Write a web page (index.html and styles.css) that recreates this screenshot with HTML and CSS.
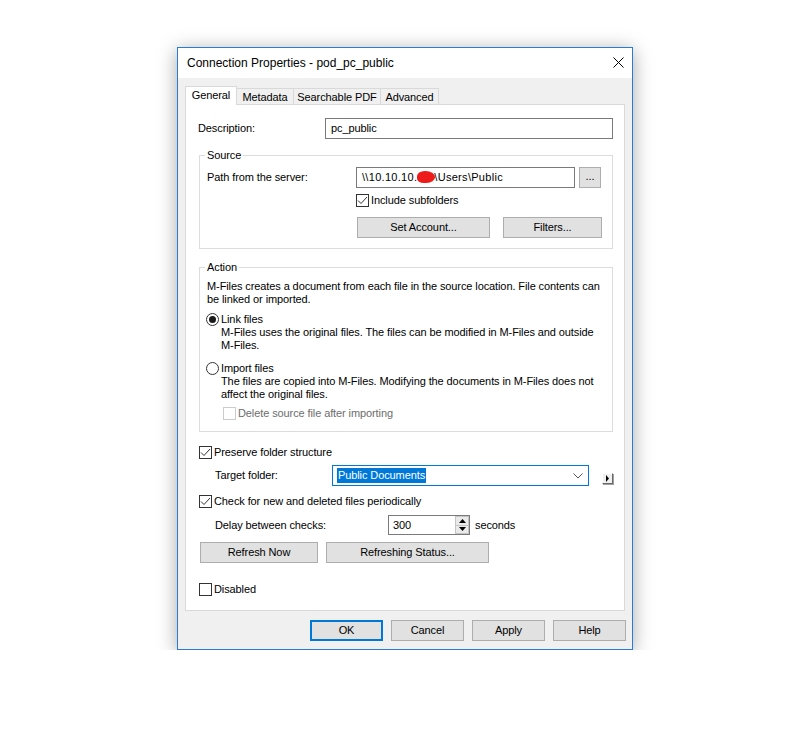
FILE: index.html
```html
<!DOCTYPE html>
<html>
<head>
<meta charset="utf-8">
<title>Connection Properties</title>
<link rel="stylesheet" href="styles.css">
</head>
<body>
<div class="stage">
  <div class="window">
    <div class="titlebar">
      <span class="title">Connection Properties - pod_pc_public</span>
      <svg class="close" width="11" height="11" viewBox="0 0 11 11"><path d="M0.5 0.5 L10.5 10.5 M10.5 0.5 L0.5 10.5" stroke="#000" stroke-width="1" fill="none"/></svg>
    </div>
    <div class="client">
      <div class="tabs">
        <div class="tab sel t-general">General</div>
        <div class="tab t-meta">Metadata</div>
        <div class="tab t-pdf">Searchable PDF</div>
        <div class="tab t-adv">Advanced</div>
      </div>
      <div class="panel">
        <div class="row desc-row">
          <span class="lbl lbl-desc">Description:</span>
          <div class="edit edit-desc">pc_public</div>
        </div>

        <fieldset class="group group-source">
          <legend>Source</legend>
          <div class="row path-row">
            <span class="lbl lbl-path">Path from the server:</span>
            <div class="edit edit-path">\\10.10.10.<span class="redact"></span>\Users\Public</div>
            <div class="btn btn-browse">...</div>
          </div>
          <div class="check check-sub">
            <span class="box"><svg width="11" height="11" viewBox="0 0 11 11"><path d="M1 5.5 L4 8.5 L10 2" stroke="#333" stroke-width="1" fill="none"/></svg></span>
            <span>Include subfolders</span>
          </div>
          <div class="row src-btns">
            <div class="btn btn-account">Set Account...</div>
            <div class="btn btn-filters">Filters...</div>
          </div>
        </fieldset>

        <fieldset class="group group-action">
          <legend>Action</legend>
          <div class="para">M-Files creates a document from each file in the source location. File contents can be linked or imported.</div>
          <div class="radio radio-link">
            <span class="circle on"><span class="dot"></span></span>
            <span>Link files</span>
          </div>
          <div class="para sub">M-Files uses the original files. The files can be modified in M-Files and outside M-Files.</div>
          <div class="radio radio-import">
            <span class="circle"></span>
            <span>Import files</span>
          </div>
          <div class="para sub">The files are copied into M-Files. Modifying the documents in M-Files does not affect the original files.</div>
          <div class="check check-delete disabled">
            <span class="box"></span>
            <span>Delete source file after importing</span>
          </div>
        </fieldset>

        <div class="check check-preserve">
          <span class="box"><svg width="11" height="11" viewBox="0 0 11 11"><path d="M1 5.5 L4 8.5 L10 2" stroke="#333" stroke-width="1" fill="none"/></svg></span>
          <span>Preserve folder structure</span>
        </div>
        <div class="row target-row">
          <span class="lbl lbl-indent lbl-target">Target folder:</span>
          <div class="combo">
            <span class="combo-sel">Public Documents</span>
            <svg class="chev" width="10" height="6" viewBox="0 0 10 6"><path d="M0.5 0.5 L5 5 L9.5 0.5" stroke="#555" stroke-width="1" fill="none"/></svg>
          </div>
          <div class="mini-btn"><svg width="5" height="7" viewBox="0 0 5 7"><path d="M1 0 L4 3.5 L1 7 Z" fill="#000"/></svg></div>
        </div>
        <div class="check check-periodic">
          <span class="box"><svg width="11" height="11" viewBox="0 0 11 11"><path d="M1 5.5 L4 8.5 L10 2" stroke="#333" stroke-width="1" fill="none"/></svg></span>
          <span>Check for new and deleted files periodically</span>
        </div>
        <div class="row delay-row">
          <span class="lbl lbl-indent lbl-delay">Delay between checks:</span>
          <div class="spin">
            <span class="spin-val">300</span>
            <div class="spin-btns">
              <div class="spin-b"><svg width="7" height="4" viewBox="0 0 7 4"><path d="M0 4 L3.5 0 L7 4 Z" fill="#000"/></svg></div>
              <div class="spin-b"><svg width="7" height="4" viewBox="0 0 7 4"><path d="M0 0 L3.5 4 L7 0 Z" fill="#000"/></svg></div>
            </div>
          </div>
          <span class="unit">seconds</span>
        </div>
        <div class="row refresh-row">
          <div class="btn btn-refresh">Refresh Now</div>
          <div class="btn btn-status">Refreshing Status...</div>
        </div>
        <div class="check check-disabled">
          <span class="box"></span>
          <span>Disabled</span>
        </div>
      </div>
      <div class="footer">
        <div class="btn fbtn default">OK</div>
        <div class="btn fbtn">Cancel</div>
        <div class="btn fbtn">Apply</div>
        <div class="btn fbtn">Help</div>
      </div>
    </div>
  </div>
</div>
</body>
</html>
```
FILE: styles.css
```css
html, body {
  margin: 0;
  padding: 0;
  background: #ffffff;
}
body {
  font-family: "Liberation Sans", Arial, sans-serif;
  font-size: 11px;
  line-height: 13px;
  letter-spacing: -0.1px;
  color: #000;
}
.stage {
  padding: 47px 0 0 177px;
}
.window {
  width: 456px;
  height: 603px;
  box-sizing: border-box;
  border: 1px solid #2a7bd2;
  background: #f0f0f0;
  box-shadow: 0 3px 18px rgba(0, 0, 0, 0.35);
  display: flex;
  flex-direction: column;
}
.titlebar {
  height: 30px;
  background: #ffffff;
  display: flex;
  align-items: center;
  padding-left: 9px;
}
.title {
  font-size: 12px;
  line-height: 15px;
  letter-spacing: 0;
}
.close {
  margin-left: auto;
  margin-right: 8px;
  margin-top: -1px;
}
.client {
  flex: 1;
  display: flex;
  flex-direction: column;
  padding: 8px 7px 8px 7px;
}
.tabs {
  display: flex;
  align-items: flex-end;
  height: 18px;
}
.tab {
  box-sizing: border-box;
  height: 16px;
  border: 1px solid #d9d9d9;
  border-bottom: none;
  background: #f0f0f0;
  text-align: center;
  line-height: 16px;
  margin-left: -1px;
}
.tab.sel {
  position: relative;
  z-index: 2;
  height: 19px;
  margin-bottom: -1px;
  background: #ffffff;
  margin-left: 0;
  line-height: 16px;
}
.t-general { width: 52px; }
.t-meta { width: 58px; }
.t-pdf { width: 88px; }
.t-adv { width: 59px; }

.panel {
  flex: 1;
  box-sizing: border-box;
  background: #ffffff;
  border: 1px solid #d9d9d9;
  padding: 13px 11px 0 12px;
  display: flex;
  flex-direction: column;
}
.row {
  display: flex;
  align-items: center;
}
.lbl {
  flex: none;
}
.lbl-desc { width: 127px; }
.edit {
  box-sizing: border-box;
  height: 21px;
  border: 1px solid #7a7a7a;
  background: #fff;
  padding-left: 5px;
  line-height: 19px;
  white-space: nowrap;
  overflow: hidden;
}
.edit-desc { flex: 1; }

.group {
  margin: 10px 0 0 1px;
  padding: 5px 7px 10px 7px;
  border: 1px solid #dcdcdc;
  min-width: 0;
}
.group legend {
  padding: 0 2px;
  margin-left: -2px;
  line-height: 13px;
}
.group-action {
  margin-top: 12px;
  padding-top: 6px;
  padding-bottom: 11px;
}

.lbl-path { width: 149px; }
.edit-path {
  width: 219px;
  flex: none;
  letter-spacing: 0.3px;
}
.redact {
  display: inline-block;
  width: 18px;
  height: 12px;
  background: #ee1b1b;
  border-radius: 45% 55% 50% 40%;
  vertical-align: -2px;
  margin: 0 -1px 0 0;
}
.btn {
  box-sizing: border-box;
  height: 21px;
  background: #e1e1e1;
  border: 1px solid #adadad;
  text-align: center;
  line-height: 19px;
  flex: none;
}
.btn-browse {
  width: 22px;
  margin-left: 4px;
  line-height: 17px;
}

.check {
  display: flex;
  align-items: center;
  height: 13px;
}
.box {
  box-sizing: border-box;
  width: 13px;
  height: 13px;
  border: 1px solid #333333;
  background: #fff;
  margin-right: 2px;
  flex: none;
  display: flex;
  align-items: center;
  justify-content: center;
}
.box svg { display: block; }
.check.disabled { color: #6d6d6d; }
.check.disabled .box { border-color: #cccccc; }

.check-sub { margin-top: 6px; margin-left: 149px; }
.src-btns { margin-top: 10px; }
.btn-account { width: 133px; margin-left: 150px; }
.btn-filters { width: 99px; margin-left: 13px; }

.para { line-height: 13px; }
.para.sub { padding-left: 14px; }
.radio {
  display: flex;
  align-items: center;
  height: 13px;
  margin-left: -1px;
}
.radio-link { margin-top: 7px; }
.radio-import { margin-top: 10px; }
.circle {
  box-sizing: border-box;
  width: 13px;
  height: 13px;
  border: 1px solid #333333;
  border-radius: 50%;
  background: #fff;
  margin-right: 2px;
  flex: none;
  display: flex;
  align-items: center;
  justify-content: center;
}
.dot {
  width: 7px;
  height: 7px;
  border-radius: 50%;
  background: #1a1a1a;
}
.check-delete { margin-top: 6px; margin-left: 16px; }

.check-preserve { margin-top: 14px; margin-left: 1px; }
.target-row { margin-top: 6px; align-items: flex-start; }
.lbl-indent { padding-left: 17px; box-sizing: border-box; }
.lbl-target { width: 134px; line-height: 21px; }
.combo {
  box-sizing: border-box;
  width: 257px;
  height: 21px;
  border: 1px solid #0078d7;
  background: #fff;
  display: flex;
  align-items: center;
  padding-left: 4px;
  flex: none;
}
.combo-sel {
  background: #0078d7;
  color: #fff;
  padding: 1px 1px 1px 1px;
  line-height: 13px;
}
.chev {
  margin-left: auto;
  margin-right: 5px;
}
.mini-btn {
  box-sizing: border-box;
  width: 11px;
  height: 11px;
  margin-left: 13px;
  margin-top: 8px;
  background: #f0f0f0;
  border-top: 1px solid #ffffff;
  border-left: 1px solid #ffffff;
  border-right: 1px solid #696969;
  border-bottom: 1px solid #696969;
  box-shadow: 1px 1px 0 #a0a0a0;
  display: flex;
  align-items: center;
  justify-content: center;
  flex: none;
}
.mini-btn svg { display: block; }
.check-periodic { margin-top: 9px; margin-left: 1px; }
.delay-row { margin-top: 7px; }
.lbl-delay { width: 190px; }
.spin {
  box-sizing: border-box;
  width: 82px;
  height: 20px;
  border: 1px solid #7a7a7a;
  background: #fff;
  display: flex;
  flex: none;
}
.spin-val {
  flex: 1;
  padding-left: 4px;
  line-height: 18px;
}
.spin-btns {
  width: 14px;
  display: flex;
  flex-direction: column;
}
.spin-b {
  flex: 1;
  box-sizing: border-box;
  background: #eaeaea;
  border: 1px solid #c4c4c4;
  display: flex;
  align-items: center;
  justify-content: center;
}
.spin-b + .spin-b { border-top: none; }
.spin-b svg { display: block; }
.unit { margin-left: 5px; }
.refresh-row { margin-top: 7px; }
.btn-refresh { width: 118px; margin-left: 2px; }
.btn-status { width: 163px; margin-left: 8px; }
.check-disabled { margin-top: 20px; margin-left: 1px; }

.footer {
  display: flex;
  justify-content: flex-end;
  margin-top: 9px;
  margin-right: -1px;
}
.fbtn {
  width: 73px;
  margin-left: 8px;
}
.fbtn.default {
  border: 2px solid #0078d7;
  line-height: 17px;
}
```
